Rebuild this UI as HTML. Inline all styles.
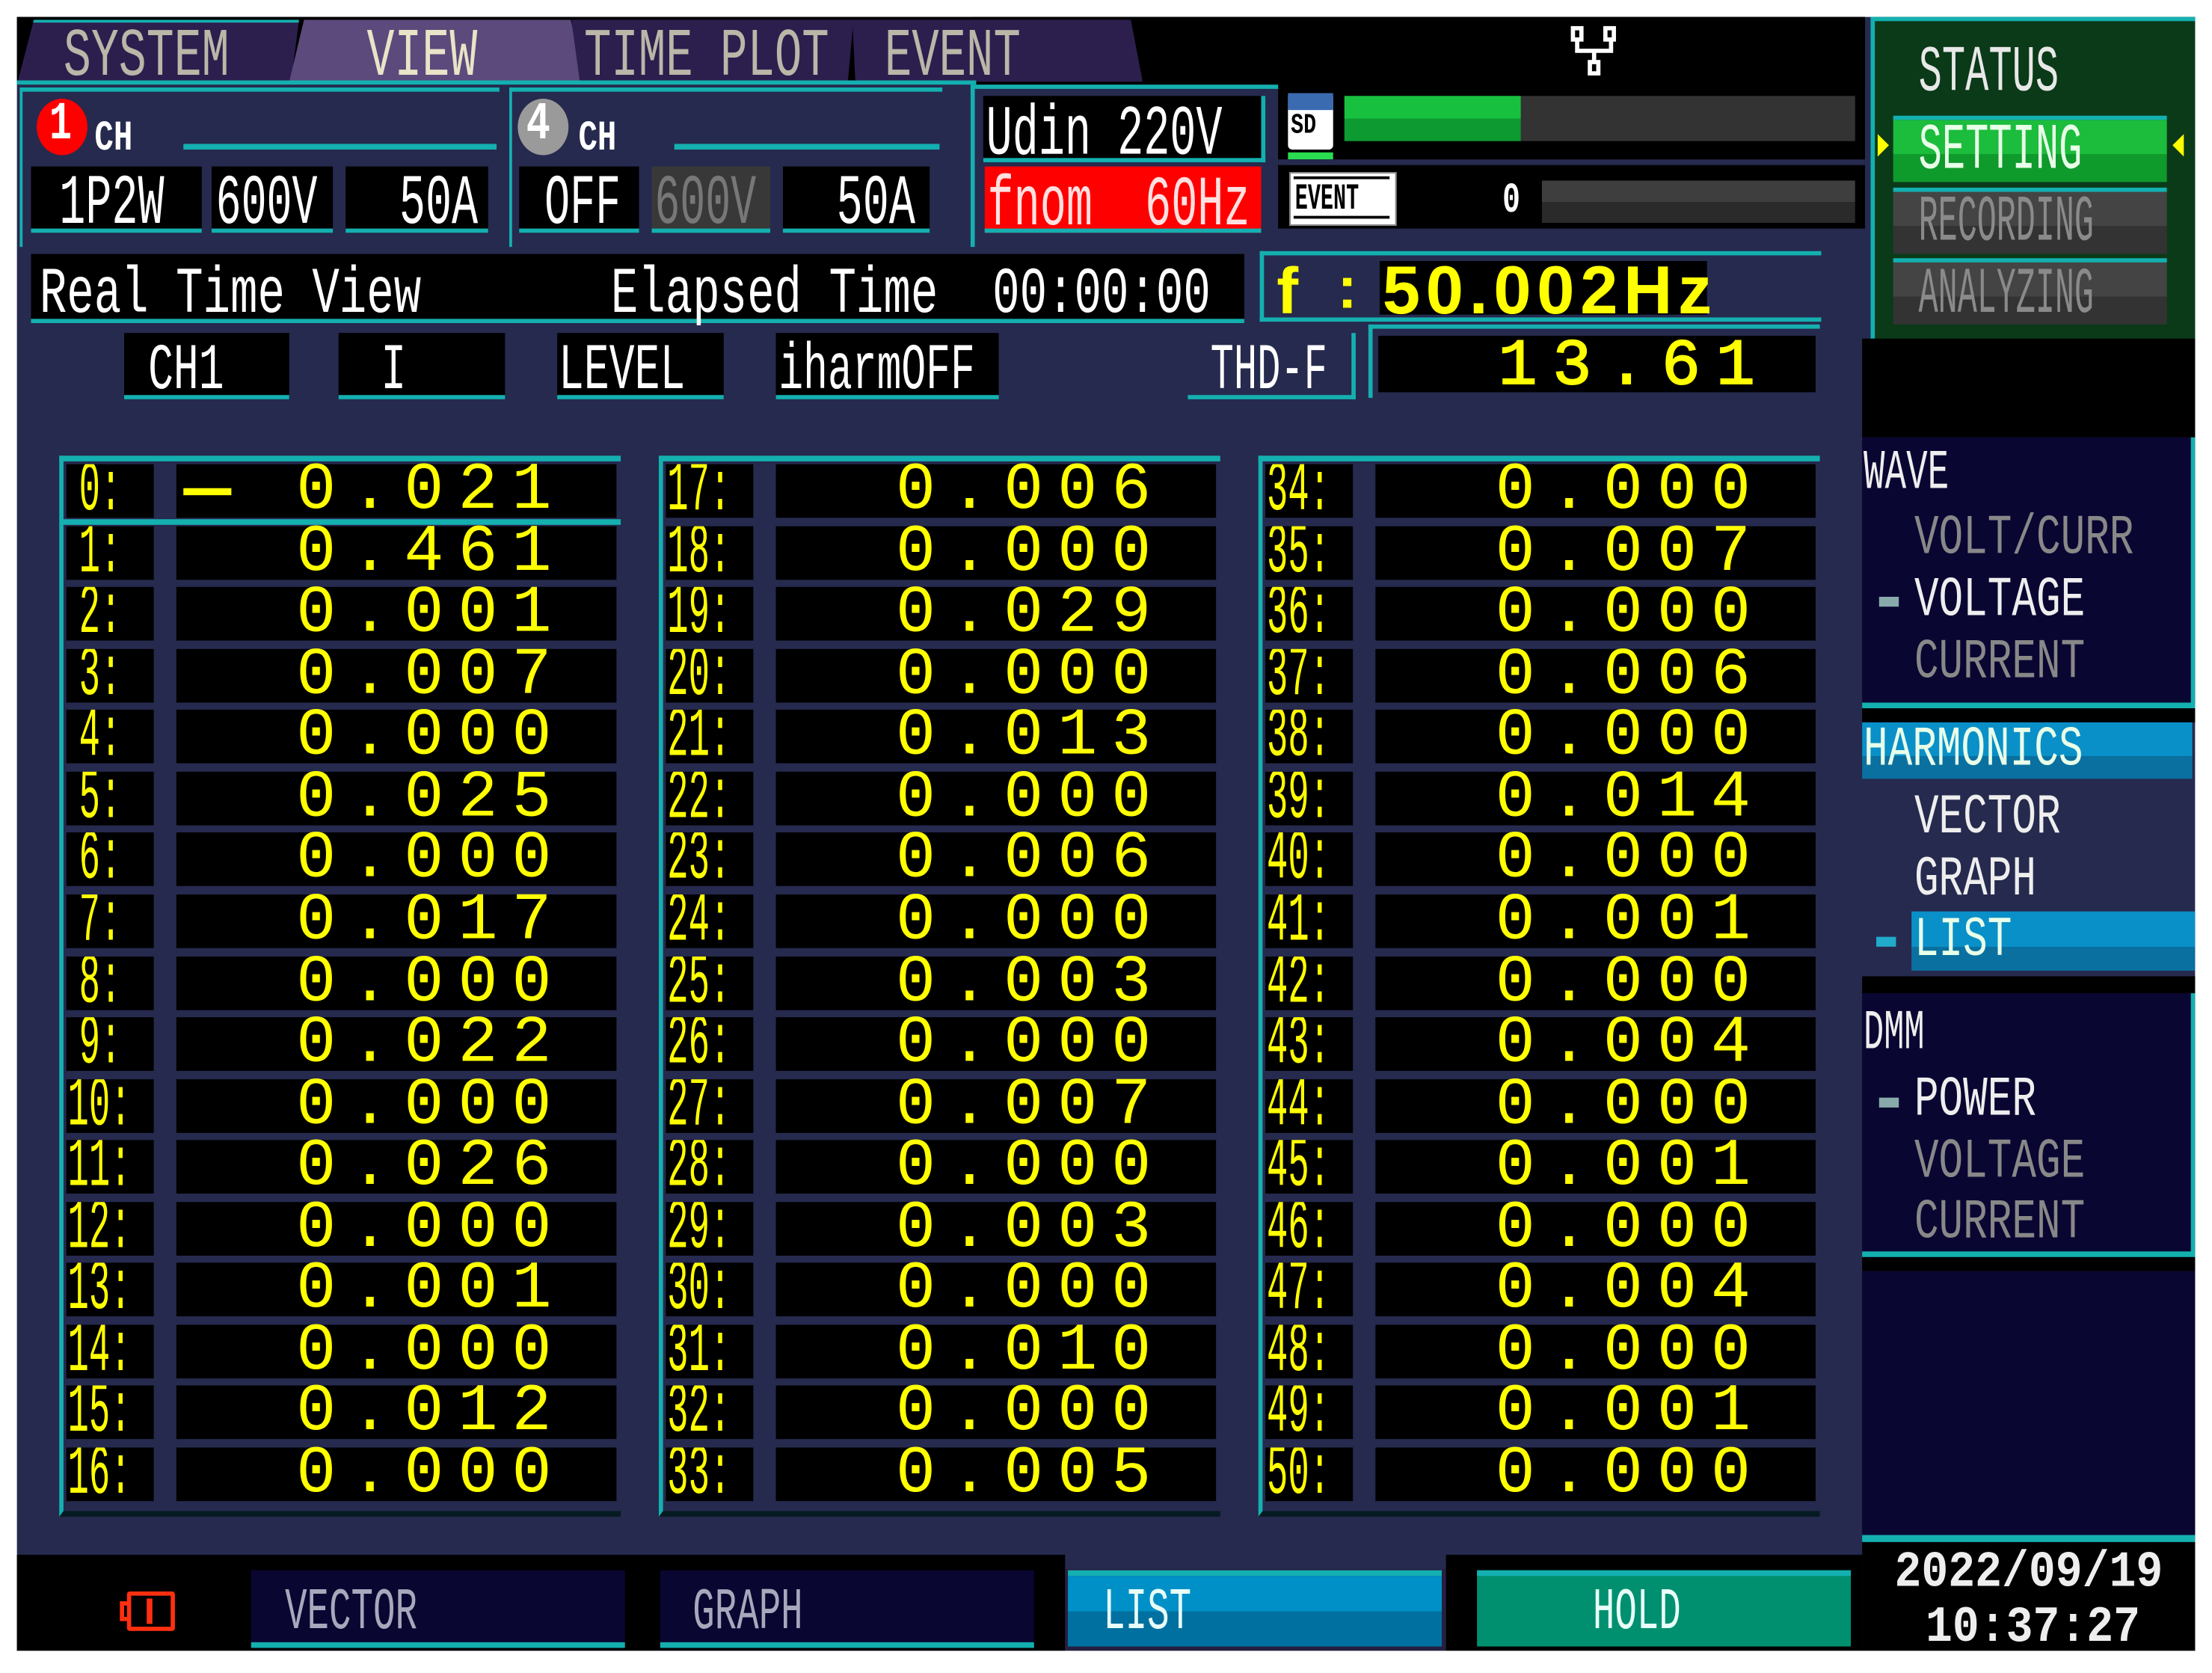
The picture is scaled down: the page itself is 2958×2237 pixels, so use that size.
<!DOCTYPE html>
<html><head><meta charset="utf-8">
<style>
html,body{margin:0;padding:0;background:#fff;width:2958px;height:2236px;overflow:hidden}
#w{position:absolute;left:0;top:0;width:1568px;height:1186px;transform:scale(1.88648);transform-origin:0 0;background:#fff}
.a{position:absolute}
.t{position:absolute;font-family:"Liberation Mono",monospace;white-space:pre;transform-origin:0 0;line-height:1}
.bx{position:absolute;background:#000;border-bottom:3px solid #14b0b0}
.lab{position:absolute;background:#000;font-family:"Liberation Mono",monospace;color:#ffff00;font-size:50px;line-height:40px;white-space:pre;overflow:hidden}
.lab span{display:inline-block;transform:scaleX(.5);transform-origin:0 0;padding-left:4px}
.val{position:absolute;background:#000;font-family:"Liberation Mono",monospace;color:#ffff00;font-size:47px;line-height:40px;text-align:right;white-space:pre;letter-spacing:10px;padding-right:36px;box-sizing:border-box}
</style></head><body><div id="w">
<div class="a" style="left:12px;top:12px;width:1544px;height:1158px;background:#262a4e"></div>
<div class="a" style="left:12px;top:12px;width:1310px;height:48px;background:#000"></div>
<div class="a" style="left:690px;top:12px;width:632px;height:150px;background:#000"></div>
<div class="a" style="left:12px;top:14px;width:200px;height:44px;background:#2c1f4e;clip-path:polygon(6% 0,100% 0,97% 100%,0 100%);border-top:2px solid #14b0b0"></div>
<div class="a" style="left:205px;top:14px;width:210px;height:44px;background:#5c4a7c;clip-path:polygon(5% 0,95% 0,100% 100%,0 100%)"></div>
<div class="a" style="left:405px;top:14px;width:200px;height:44px;background:#2c1f4e;clip-path:polygon(0 0,100% 0,98% 100%,3% 100%)"></div>
<div class="a" style="left:600px;top:14px;width:210px;height:44px;background:#2c1f4e;clip-path:polygon(2% 0,96% 0,100% 100%,3% 100%)"></div>
<div class="a" style="left:12px;top:57px;width:680px;height:3px;background:#14b0b0"></div>
<div class="t" style="left:45px;top:17px;font-size:48px;color:#bbb6a8;transform:scaleX(.68)">SYSTEM</div>
<div class="t" style="left:260px;top:17px;font-size:48px;color:#e8e4c8;transform:scaleX(.68)">VIEW</div>
<div class="t" style="left:414px;top:17px;font-size:48px;color:#bbb6a8;transform:scaleX(.67)">TIME PLOT</div>
<div class="t" style="left:627px;top:17px;font-size:48px;color:#bbb6a8;transform:scaleX(.67)">EVENT</div>
<svg class="a" style="left:1110px;top:16px" width="42" height="40" viewBox="0 0 42 40"><g fill="none" stroke="#fff" stroke-width="3"><rect x="5" y="4" width="6" height="8"/><rect x="28" y="4" width="6" height="8"/><path d="M8 12v8h24v-8M20 20v8"/><rect x="17" y="28" width="6" height="8"/></g></svg>
<div class="a" style="left:14px;top:62px;width:338px;height:110px;border-left:2px solid #14b0b0;border-top:3px solid #14b0b0"></div>
<div class="a" style="left:130px;top:102px;width:222px;height:4px;background:#14b0b0"></div>
<div class="a" style="left:26px;top:70px;width:36px;height:40px;border-radius:50%;background:#f00"></div>
<div class="t" style="left:35px;top:70px;font-size:38px;font-weight:bold;color:#fff;transform:scaleX(.7)">1</div>
<div class="t" style="left:67px;top:84px;font-size:30px;font-weight:bold;color:#fff;transform:scaleX(.75)">CH</div>
<div class="bx" style="left:22px;top:118px;width:121px;height:44px"></div>
<div class="bx" style="left:150px;top:118px;width:86px;height:44px"></div>
<div class="bx" style="left:245px;top:118px;width:101px;height:44px"></div>
<div class="t" style="left:42px;top:121px;font-size:50px;color:#fff;transform:scaleX(.62)">1P2W</div>
<div class="t" style="left:153px;top:121px;font-size:50px;color:#fff;transform:scaleX(.6)">600V</div>
<div class="t" style="left:283px;top:121px;font-size:50px;color:#fff;transform:scaleX(.62)">50A</div>
<div class="a" style="left:361px;top:62px;width:305px;height:110px;border-left:2px solid #14b0b0;border-top:3px solid #14b0b0"></div>
<div class="a" style="left:478px;top:102px;width:188px;height:4px;background:#14b0b0"></div>
<div class="a" style="left:367px;top:70px;width:36px;height:40px;border-radius:50%;background:#9a9a9a"></div>
<div class="t" style="left:373px;top:70px;font-size:38px;font-weight:bold;color:#fff;transform:scaleX(.75)">4</div>
<div class="t" style="left:410px;top:84px;font-size:30px;font-weight:bold;color:#fff;transform:scaleX(.75)">CH</div>
<div class="bx" style="left:368px;top:118px;width:85px;height:44px"></div>
<div class="bx" style="left:462px;top:118px;width:84px;height:44px;background:#383838"></div>
<div class="bx" style="left:555px;top:118px;width:104px;height:44px"></div>
<div class="t" style="left:386px;top:121px;font-size:50px;color:#fff;transform:scaleX(.6)">OFF</div>
<div class="t" style="left:464px;top:121px;font-size:50px;color:#777;transform:scaleX(.6)">600V</div>
<div class="t" style="left:593px;top:121px;font-size:50px;color:#fff;transform:scaleX(.62)">50A</div>
<div class="a" style="left:688px;top:60px;width:215px;height:112px;background:#262a4e;border-left:3px solid #14b0b0;border-top:3px solid #14b0b0"></div>
<div class="bx" style="left:697px;top:68px;width:197px;height:44px;border-right:3px solid #14b0b0"></div>
<div class="bx" style="left:698px;top:118px;width:196px;height:44px;background:#ff0000"></div>
<div class="t" style="left:699px;top:72px;font-size:50px;color:#fff;transform:scaleX(.62)">Udin 220V</div>
<div class="t" style="left:700px;top:122px;font-size:50px;color:#ffe0e0;transform:scaleX(.62)">fnom  60Hz</div>
<div class="a" style="left:913px;top:66px;width:32px;height:40px;background:#fff;border-radius:3px"></div>
<div class="a" style="left:913px;top:66px;width:32px;height:12px;background:#3a6ab0"></div>
<div class="t" style="left:915px;top:80px;font-size:20px;font-weight:bold;color:#000;transform:scaleX(.75)">SD</div>
<div class="a" style="left:913px;top:108px;width:32px;height:5px;background:#2adc50"></div>
<div class="a" style="left:953px;top:68px;width:362px;height:32px;background:#333"></div>
<div class="a" style="left:953px;top:68px;width:125px;height:32px;background:linear-gradient(#18c040 50%,#0d9a30 50%)"></div>
<div class="a" style="left:906px;top:113px;width:416px;height:4px;background:#262a4e"></div>
<div class="a" style="left:914px;top:122px;width:74px;height:36px;background:#fff;border:1px solid #888"></div>
<div class="t" style="left:918px;top:128px;font-size:26px;font-weight:bold;color:#000;transform:scaleX(.58)">EVENT</div>
<div class="a" style="left:917px;top:125px;width:68px;height:2px;background:#000"></div>
<div class="a" style="left:917px;top:153px;width:68px;height:2px;background:#000"></div>
<div class="t" style="left:1065px;top:128px;font-size:30px;font-weight:bold;color:#fff;transform:scaleX(.7)">0</div>
<div class="a" style="left:1093px;top:128px;width:222px;height:30px;background:linear-gradient(#3e3e3e 50%,#2a2a2a 50%)"></div>
<div class="a" style="left:1326px;top:12px;width:230px;height:228px;background:#0a3a18;border-top:3px solid #14b0b0;border-left:3px solid #14b0b0;box-sizing:border-box"></div>
<div class="a" style="left:1320px;top:240px;width:236px;height:70px;background:#000"></div>
<div class="t" style="left:1360px;top:29px;font-size:46px;color:#e8e8e8;transform:scaleX(.6)">STATUS</div>
<div class="a" style="left:1342px;top:82px;width:194px;height:44px;background:linear-gradient(#1cbc3c 55%,#0f9a2c 55%);border-top:3px solid #14b0b0"></div>
<div class="t" style="left:1360px;top:84px;font-size:46px;color:#e8ffe8;transform:scaleX(.6)">SETTING</div>
<div class="a" style="left:1331px;top:95px;width:0;height:0;border-top:8px solid transparent;border-bottom:8px solid transparent;border-left:8px solid #ff0"></div>
<div class="a" style="left:1540px;top:95px;width:0;height:0;border-top:8px solid transparent;border-bottom:8px solid transparent;border-right:8px solid #ff0"></div>
<div class="a" style="left:1342px;top:133px;width:194px;height:44px;background:linear-gradient(#444 55%,#333 55%);border-top:3px solid #14b0b0"></div>
<div class="t" style="left:1360px;top:135px;font-size:46px;color:#8a8a8a;transform:scaleX(.5)">RECORDING</div>
<div class="a" style="left:1342px;top:183px;width:194px;height:44px;background:linear-gradient(#444 55%,#333 55%);border-top:3px solid #14b0b0"></div>
<div class="t" style="left:1360px;top:186px;font-size:46px;color:#8a8a8a;transform:scaleX(.5)">ANALYZING</div>
<div class="bx" style="left:22px;top:180px;width:860px;height:46px"></div>
<div class="t" style="left:28px;top:186px;font-size:46px;color:#fff;transform:scaleX(.7)">Real Time View</div>
<div class="t" style="left:433px;top:186px;font-size:46px;color:#fff;transform:scaleX(.7)">Elapsed Time  00:00:00</div>
<div class="a" style="left:893px;top:178px;width:398px;height:50px;background:#262a4e;border-top:3px solid #14b0b0;border-left:3px solid #14b0b0;border-bottom:3px solid #14b0b0;box-sizing:border-box"></div>
<div class="a" style="left:978px;top:185px;width:232px;height:38px;background:#000"></div>
<div class="t" style="left:905px;top:183px;font-size:46px;font-weight:bold;color:#ff0;font-family:'Liberation Sans',sans-serif">f</div>
<div class="t" style="left:948px;top:183px;font-size:42px;font-weight:bold;color:#ff0;font-family:'Liberation Sans',sans-serif">:</div>
<div class="t" style="left:980px;top:183px;font-size:48px;font-weight:bold;color:#ff0;font-family:'Liberation Sans',sans-serif;letter-spacing:4px">50.002Hz</div>
<div class="bx" style="left:88px;top:236px;width:117px;height:44px"></div>
<div class="bx" style="left:240px;top:236px;width:118px;height:44px"></div>
<div class="bx" style="left:395px;top:236px;width:118px;height:44px"></div>
<div class="bx" style="left:550px;top:236px;width:158px;height:44px"></div>
<div class="t" style="left:105px;top:240px;font-size:46px;color:#fff;transform:scaleX(.65)">CH1</div>
<div class="t" style="left:270px;top:240px;font-size:46px;color:#fff;transform:scaleX(.65)">I</div>
<div class="t" style="left:396px;top:240px;font-size:46px;color:#fff;transform:scaleX(.65)">LEVEL</div>
<div class="t" style="left:552px;top:240px;font-size:46px;color:#fff;transform:scaleX(.63)">iharmOFF</div>
<div class="a" style="left:842px;top:236px;width:116px;height:44px;border-bottom:3px solid #14b0b0;border-right:3px solid #14b0b0"></div>
<div class="t" style="left:858px;top:240px;font-size:46px;color:#fff;transform:scaleX(.6)">THD-F</div>
<div class="a" style="left:970px;top:230px;width:320px;height:52px;border-top:3px solid #14b0b0;border-left:3px solid #14b0b0;box-sizing:border-box"></div>
<div class="a" style="left:977px;top:238px;width:310px;height:40px;background:#000"></div>
<div class="t" style="left:1062px;top:237px;font-size:46px;color:#ff0;letter-spacing:11px;-webkit-text-stroke:1px #ff0">13.61</div>
<div class="a" style="left:1320px;top:310px;width:236px;height:192px;background:#0a0632;border-right:3px solid #14b0b0;box-sizing:border-box"></div>
<div class="a" style="left:1320px;top:498px;width:236px;height:4px;background:#14b0b0"></div>
<div class="a" style="left:1320px;top:502px;width:236px;height:10px;background:#000"></div>
<div class="t" style="left:1321px;top:317px;font-size:40px;color:#eee;transform:scaleX(.63)">WAVE</div>
<div class="t" style="left:1357px;top:363px;font-size:40px;color:#888;transform:scaleX(.72)">VOLT/CURR</div>
<div class="a" style="left:1332px;top:423px;width:14px;height:7px;background:#8aa"></div>
<div class="t" style="left:1357px;top:407px;font-size:40px;color:#eee;transform:scaleX(.72)">VOLTAGE</div>
<div class="t" style="left:1357px;top:451px;font-size:40px;color:#888;transform:scaleX(.72)">CURRENT</div>
<div class="a" style="left:1320px;top:512px;width:234px;height:40px;background:linear-gradient(#0a90c8 60%,#0a70a0 60%)"></div>
<div class="t" style="left:1321px;top:513px;font-size:40px;color:#e8ffe8;transform:scaleX(.72)">HARMONICS</div>
<div class="t" style="left:1357px;top:561px;font-size:40px;color:#eee;transform:scaleX(.72)">VECTOR</div>
<div class="t" style="left:1357px;top:605px;font-size:40px;color:#eee;transform:scaleX(.72)">GRAPH</div>
<div class="a" style="left:1355px;top:646px;width:201px;height:42px;background:linear-gradient(#0a90c8 60%,#0a70a0 60%)"></div>
<div class="a" style="left:1330px;top:664px;width:14px;height:7px;background:#2ac"></div>
<div class="t" style="left:1357px;top:648px;font-size:40px;color:#e8ffe8;transform:scaleX(.72)">LIST</div>
<div class="a" style="left:1320px;top:692px;width:236px;height:12px;background:#000"></div>
<div class="a" style="left:1320px;top:704px;width:236px;height:186px;background:#0a0632;border-right:3px solid #14b0b0;box-sizing:border-box"></div>
<div class="a" style="left:1320px;top:887px;width:236px;height:4px;background:#14b0b0"></div>
<div class="a" style="left:1320px;top:891px;width:236px;height:10px;background:#000"></div>
<div class="t" style="left:1321px;top:714px;font-size:40px;color:#eee;transform:scaleX(.6)">DMM</div>
<div class="a" style="left:1332px;top:778px;width:14px;height:7px;background:#8aa"></div>
<div class="t" style="left:1357px;top:761px;font-size:40px;color:#eee;transform:scaleX(.72)">POWER</div>
<div class="t" style="left:1357px;top:805px;font-size:40px;color:#888;transform:scaleX(.72)">VOLTAGE</div>
<div class="t" style="left:1357px;top:848px;font-size:40px;color:#888;transform:scaleX(.72)">CURRENT</div>
<div class="a" style="left:1320px;top:901px;width:236px;height:190px;background:#0a0632"></div>
<div class="a" style="left:1320px;top:1088px;width:236px;height:5px;background:#14b0b0"></div>
<div class="a" style="left:1320px;top:1093px;width:236px;height:77px;background:#000"></div>
<div class="t" style="left:1343px;top:1097px;font-size:36px;font-weight:bold;color:#eee;transform:scaleX(.88)">2022/09/19</div>
<div class="t" style="left:1365px;top:1136px;font-size:36px;font-weight:bold;color:#eee;transform:scaleX(.88)">10:37:27</div>
<div class="a" style="left:12px;top:1102px;width:743px;height:68px;background:#000"></div>
<div class="a" style="left:1025px;top:1102px;width:295px;height:68px;background:#000"></div>
<div class="a" style="left:755px;top:1112px;width:270px;height:58px;background:#262040"></div>
<div class="a" style="left:90px;top:1128px;width:34px;height:28px;border:3px solid #ff3010;box-sizing:border-box;border-radius:2px"></div>
<div class="a" style="left:85px;top:1135px;width:6px;height:14px;border:3px solid #ff3010;border-right:none;box-sizing:border-box"></div>
<div class="a" style="left:104px;top:1133px;width:4px;height:18px;background:#ff3010"></div>
<div class="a" style="left:178px;top:1113px;width:265px;height:55px;background:#0a0632;border-bottom:4px solid #14b0b0;box-sizing:border-box"></div>
<div class="a" style="left:468px;top:1113px;width:265px;height:55px;background:#0a0632;border-bottom:4px solid #14b0b0;box-sizing:border-box"></div>
<div class="a" style="left:757px;top:1113px;width:265px;height:54px;background:linear-gradient(#0090c8 50%,#0070a0 50%);border-top:4px solid #14b0b0;box-sizing:border-box"></div>
<div class="a" style="left:1047px;top:1113px;width:265px;height:54px;background:#009070;border-top:4px solid #14b0b0;box-sizing:border-box"></div>
<div class="t" style="left:202px;top:1122px;font-size:42px;color:#a8a8bc;transform:scaleX(.62)">VECTOR</div>
<div class="t" style="left:491px;top:1122px;font-size:42px;color:#a8a8bc;transform:scaleX(.62)">GRAPH</div>
<div class="t" style="left:782px;top:1122px;font-size:42px;color:#e8fff8;transform:scaleX(.62)">LIST</div>
<div class="t" style="left:1129px;top:1122px;font-size:42px;color:#e8fff8;transform:scaleX(.62)">HOLD</div>
<div class="a" style="left:42px;top:323px;width:398px;height:752px;background:#262a4e;border-left:3px solid #14b0b0;border-top:4px solid #14b0b0;border-bottom:4px solid #061a22;box-sizing:border-box"></div>
<div class="a" style="left:467px;top:323px;width:398px;height:752px;background:#262a4e;border-left:3px solid #14b0b0;border-top:4px solid #14b0b0;border-bottom:4px solid #061a22;box-sizing:border-box"></div>
<div class="a" style="left:892px;top:323px;width:398px;height:752px;background:#262a4e;border-left:3px solid #14b0b0;border-top:4px solid #14b0b0;border-bottom:4px solid #061a22;box-sizing:border-box"></div>
<div id="rows"></div>
<div class="a" style="left:44px;top:368px;width:396px;height:4px;background:#14b0b0"></div>
<div class="a" style="left:130px;top:346px;width:34px;height:5px;background:#ff0"></div>
<script>
(function(){
var v=["0.021","0.461","0.001","0.007","0.000","0.025","0.000","0.017","0.000","0.022","0.000","0.026","0.000","0.001","0.000","0.012","0.000",
"0.006","0.000","0.029","0.000","0.013","0.000","0.006","0.000","0.003","0.000","0.007","0.000","0.003","0.000","0.010","0.000","0.005",
"0.000","0.007","0.000","0.006","0.000","0.014","0.000","0.001","0.000","0.004","0.000","0.001","0.000","0.004","0.000","0.001","0.000"];
var h="",xs=[42,467,892];
for(var c=0;c<3;c++)for(var r=0;r<17;r++){var n=c*17+r;var tp=(329+r*43.56).toFixed(1);var x=xs[c];
var pad=n<10?18:2;
h+='<div class="lab" style="left:'+(x+5)+'px;top:'+tp+'px;width:62px;height:38px"><span style="padding-left:'+pad+'px">'+n+':</span></div>';
h+='<div class="val" style="left:'+(x+83)+'px;top:'+tp+'px;width:312px;height:38px">'+v[n]+'</div>';}
document.getElementById("rows").innerHTML=h;
})();
</script>
</div></body></html>
